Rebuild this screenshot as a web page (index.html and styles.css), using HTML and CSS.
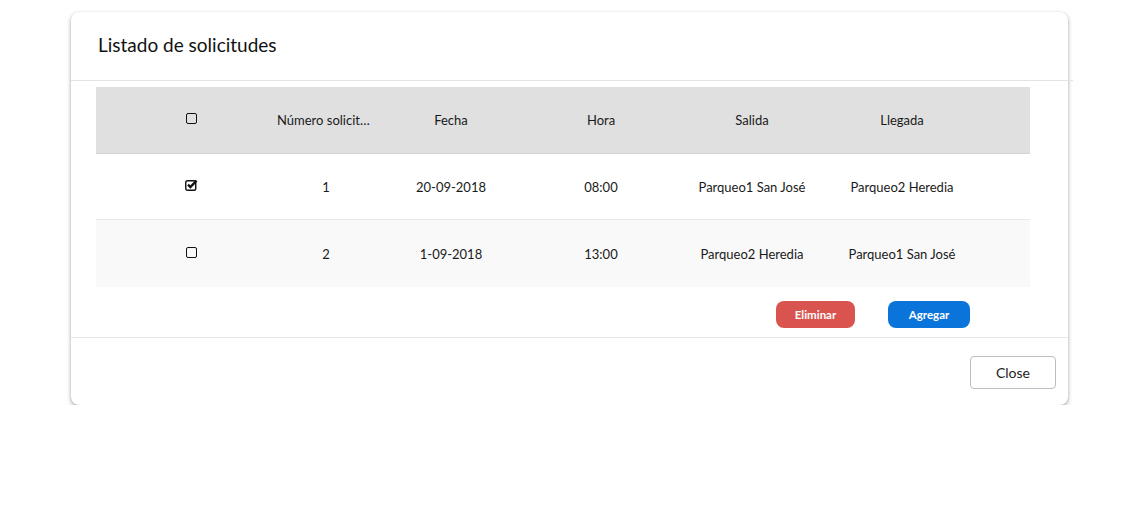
FILE: index.html
```html
<!DOCTYPE html>
<html lang="es">
<head>
<meta charset="utf-8">
<title>Listado de solicitudes</title>
<link rel="stylesheet" href="styles.css">
</head>
<body>
<div class="modal">
  <div class="modal-header">
    <h2 class="modal-title">Listado de solicitudes</h2>
  </div>
  <div class="modal-body">
    <div class="grid">
      <div class="row head">
        <div class="cell lead"></div>
        <div class="cell"><span class="box"></span></div>
        <div class="cell trunc">Número solicitud</div>
        <div class="cell">Fecha</div>
        <div class="cell">Hora</div>
        <div class="cell">Salida</div>
        <div class="cell">Llegada</div>
        <div class="cell"></div>
      </div>
      <div class="row">
        <div class="cell lead"></div>
        <div class="cell">
          <svg class="chk" width="13" height="12" viewBox="0 0 13 12"><rect x="0.75" y="1.75" width="10" height="9.5" rx="1.8" fill="none" stroke="#111" stroke-width="1.4"/><path d="M3 5.6 L5.4 8 L11.6 1.6" fill="none" stroke="#111" stroke-width="2.4" stroke-linejoin="miter" stroke-linecap="butt"/></svg>
        </div>
        <div class="cell">1</div>
        <div class="cell">20-09-2018</div>
        <div class="cell">08:00</div>
        <div class="cell">Parqueo1 San José</div>
        <div class="cell">Parqueo2 Heredia</div>
        <div class="cell"></div>
      </div>
      <div class="row alt">
        <div class="cell lead"></div>
        <div class="cell"><span class="box"></span></div>
        <div class="cell">2</div>
        <div class="cell">1-09-2018</div>
        <div class="cell">13:00</div>
        <div class="cell">Parqueo2 Heredia</div>
        <div class="cell">Parqueo1 San José</div>
        <div class="cell"></div>
      </div>
    </div>
    <div class="actions">
      <button class="btn btn-danger">Eliminar</button>
      <button class="btn btn-primary">Agregar</button>
    </div>
  </div>
  <div class="modal-footer">
    <button class="btn-close">Close</button>
  </div>
</div>
</body>
</html>
```
FILE: styles.css
```css
* { box-sizing: border-box; }
html, body { margin: 0; padding: 0; background: #fff; }
body {
  font-family: "Lato", "Source Sans Pro", "Noto Sans", sans-serif;
  color: #212121;
  padding: 12px 55px 0 71px;
}
.modal {
  width: 997px;
  height: 393px;
  background: #fff;
  border-radius: 8px;
  box-shadow: 0 2px 4px rgba(0,0,0,0.35), 0 0 1px rgba(0,0,0,0.12);
  display: flex;
  flex-direction: column;
}
.modal-header {
  height: 69px;
  padding: 0 27px;
  display: flex;
  align-items: center;
  border-bottom: 1px solid #e3e3e3;
  margin-right: -5px;
}
.modal-title {
  margin: 0;
  font-size: 19px;
  font-weight: 400;
  color: #111;
  position: relative;
  top: -2px;
}
.modal-body {
  padding: 6px 38px 9px 25px;
  border-bottom: 1px solid #e6e6e6;
}
.grid { display: flex; flex-direction: column; }
.row {
  display: grid;
  grid-template-columns: 20px 150px 120px 130px 170px 132px 168px 1fr;
  height: 66px;
  align-items: center;
  font-size: 13px;
  color: #1a1a1a;
  border-bottom: 1px solid #e8e8e8;
}
.row.head {
  background: #e0e0e0;
  border-bottom: 1px solid #d4d4d4;
  height: 67px;
}
.row.alt { background: #f9f9f9; border-bottom: none; height: 67px; }
.cell {
  text-align: center;
  white-space: nowrap;
  padding: 0;
  display: flex;
  justify-content: center;
  align-items: center;
}
.cell.trunc {
  display: block;
  overflow: hidden;
  text-overflow: ellipsis;
  padding: 0 16px 0 11px;
  text-align: left;
}
.box {
  display: inline-block;
  width: 11px;
  height: 11px;
  border: 1.4px solid #111;
  border-radius: 2px;
  margin-top: -3px;
}
.chk { margin-top: -4px; margin-left: 1px; }
.actions {
  display: flex;
  justify-content: flex-end;
  gap: 33px;
  padding: 14px 60px 0 0;
}
.btn {
  border: none;
  border-radius: 8px;
  height: 27px;
  font-family: inherit;
  font-size: 11.5px;
  font-weight: 700;
  color: #fff;
  padding: 0;
}
.btn-danger { background: #d9534f; width: 79px; }
.btn-primary { background: #0a74da; width: 82px; }
.modal-footer {
  flex: 1;
  display: flex;
  justify-content: flex-end;
  align-items: flex-start;
  padding: 18px 12px 0 0;
}
.btn-close {
  width: 86px;
  height: 33px;
  border: 1px solid #bdbdbd;
  border-radius: 4px;
  background: #fff;
  font-family: inherit;
  font-size: 14px;
  color: #222;
}
```
